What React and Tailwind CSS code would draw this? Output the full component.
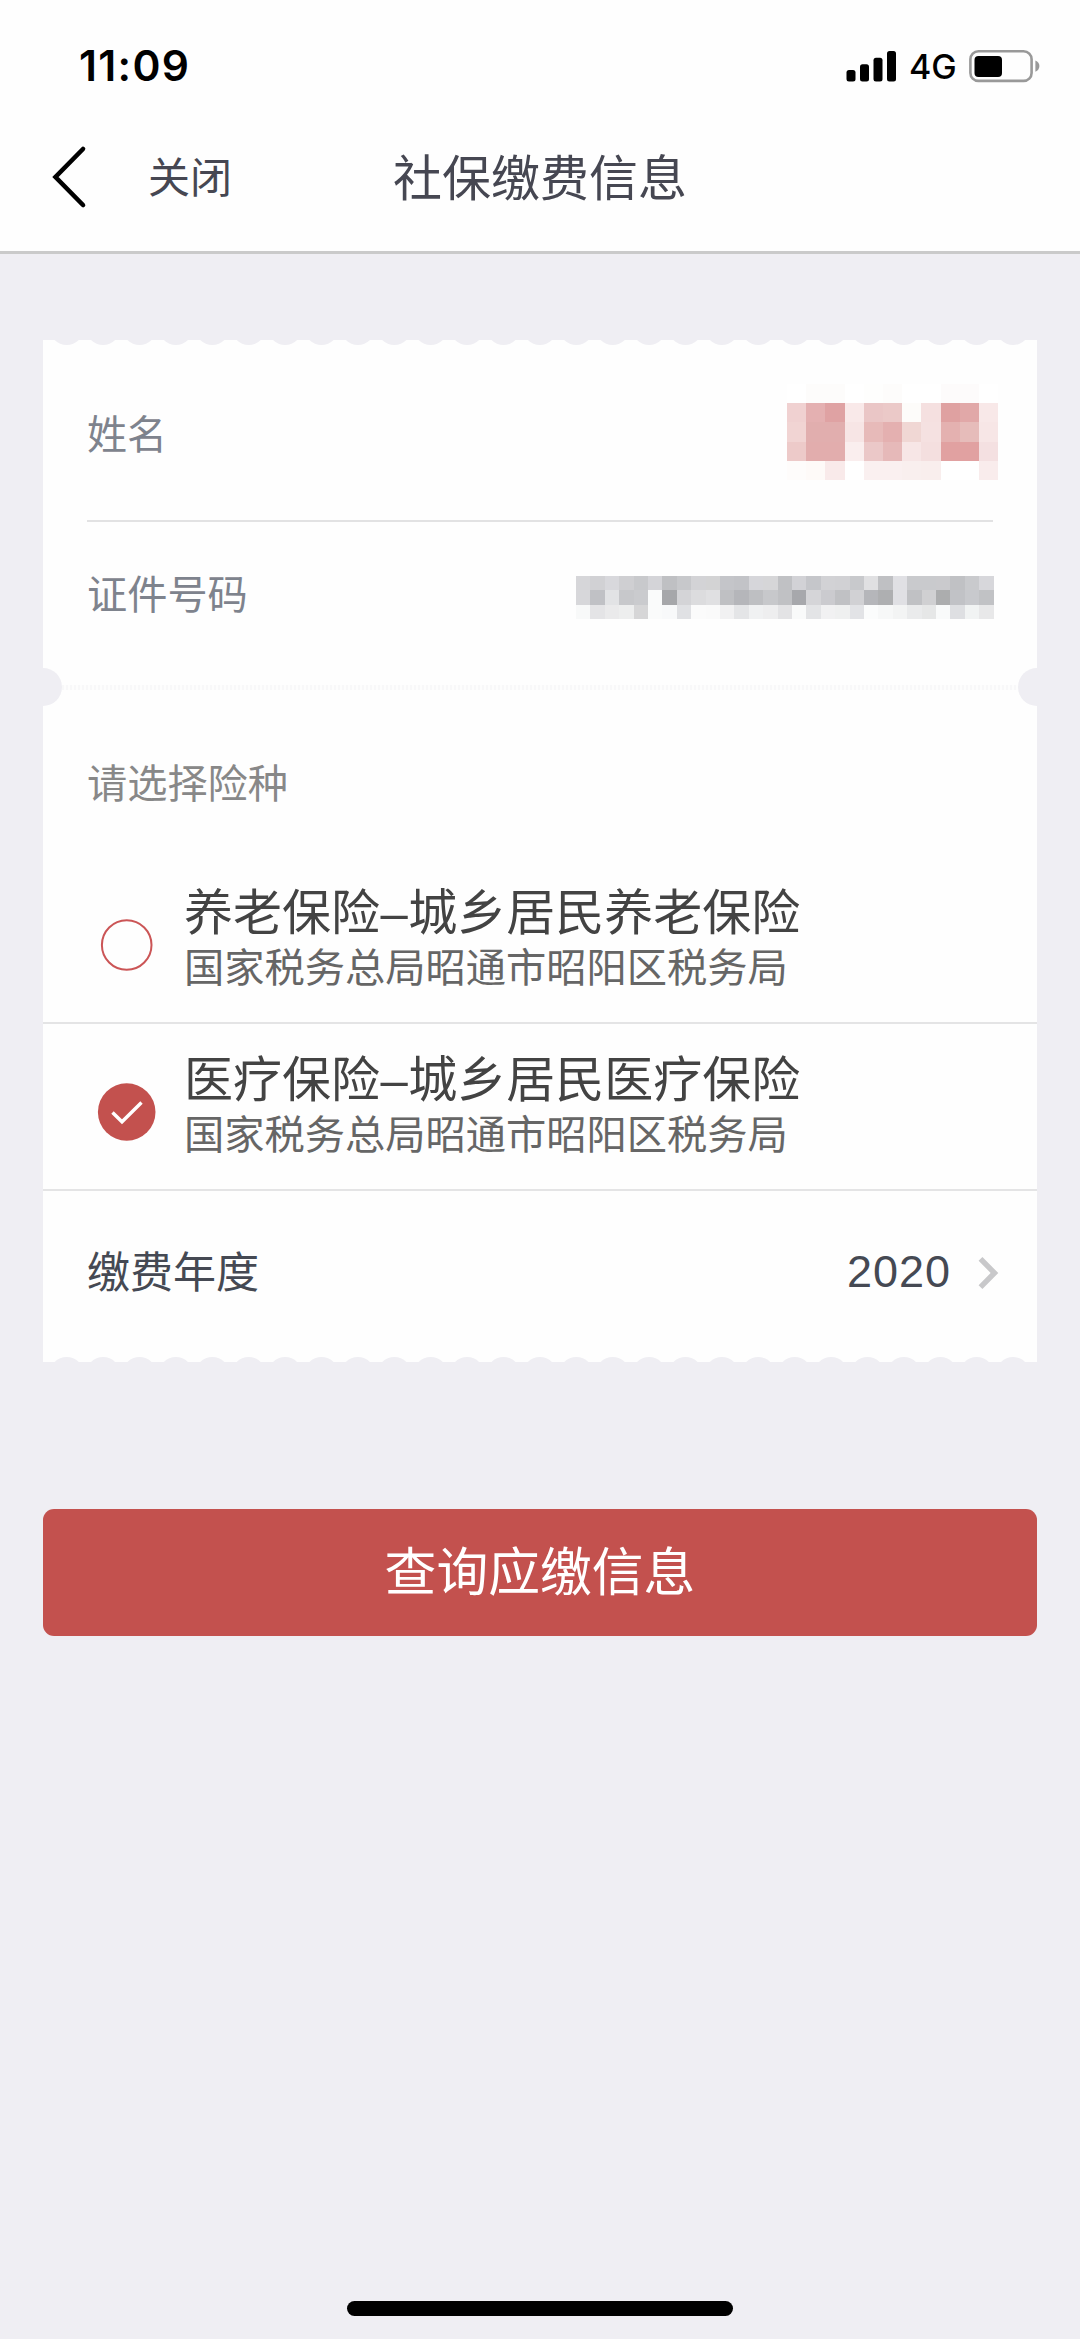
const NAME_MOSAIC = [
  ["#ffffff", "#fdfcfb", "#fdfcfb", "#ffffff", "#fefefd", "#fdfcfb", "#ffffff", "#ffffff", "#fdfbfb", "#fdfbfb", "#ffffff"],
  ["#f0d1d1", "#e4b0b1", "#dfa2a3", "#f9e9e9", "#eac6c6", "#ebc9c8", "#fdfcfa", "#f5e0e0", "#dfa1a1", "#e1a8a8", "#f8e8e8"],
  ["#f1d4d3", "#e1aeae", "#e1aeae", "#f7e5e5", "#e7bab9", "#e4b0b0", "#f0d7d4", "#f5e1e1", "#e4b1b0", "#e6bcba", "#f7e6e6"],
  ["#edcac9", "#e2adad", "#e2adad", "#faeeee", "#ebc8c8", "#e6b9b9", "#f7e6e6", "#f4dfdf", "#e1a1a1", "#e1a1a1", "#f4e0e1"],
  ["#fefcfb", "#fefaf8", "#f9eaea", "#ffffff", "#faf0f0", "#faf0f0", "#f9efee", "#f9eeed", "#ffffff", "#ffffff", "#f9ecec"],
];

const ID_MOSAIC = [
  "d6d6d9 d1d1d4 d8d8dc cfcfd2 c8c9cc d4d4d8 bfc0c3 c7c8cb d3d3d6 d3d3d4 c4c5c9 c2c3c7 d6d6da d6d6d8 c0c1c4 d2d2d6 c5c6ca d2d2d5 d1d1d4 c8c9cc e0e0e2 bfc0c3 e0e0e4 c9cacd c9cacd cacacd c0c1c4 c9cacd d7d7db",
  "d7d7da c0c1c5 e2e3e5 c7c8cb cacbce fafbfb a6a7aa d4d4d7 dcdcde e0e0e2 bfc0c3 b5b6ba bebfc2 c7c8cb c0c1c4 a7a8ac d5d5d8 cbcbcf c0c1c4 d1d1d4 b5b6ba aeafb1 e0e0e4 c0c1c4 d0d0d2 acadae c1c2c6 c8c9cd c1c2c5",
  "f8f9f9 e4e4e6 eaeaeb edeeee d6d6d7 fafbfb f8f9fa e0e1e4 fbfbfb fafafa f1f1f2 e4e5e7 f0f1f2 eeeeef e3e3e5 f9fafa e3e4e6 f1f1f2 eff0f0 e2e3e6 fbfcfc f7f8f8 f3f4f4 eaebec e6e7e7 f9fafa dedfe2 f1f3f3 e8e8e9",
].map((row) => row.split(" ").map((c) => "#" + c));

function Mosaic({ rows, cell, className }) {
  return (
    <svg
      className={className}
      width={rows[0].length * cell}
      height={rows.length * cell}
      shapeRendering="crispEdges"
      aria-hidden="true"
    >
      {rows.map((row, y) =>
        row.map((fill, x) => (
          <rect key={`${x}-${y}`} x={x * cell} y={y * cell} width={cell} height={cell} fill={fill} />
        ))
      )}
    </svg>
  );
}

function Scallops({ className, flip }) {
  return (
    <svg className={className} width="994" height="5" viewBox="0 0 994 5" aria-hidden="true">
      {Array.from({ length: 27 }, (_, i) => (
        <circle key={i} cx={23.7 + i * 36.4} cy={flip ? 17 : -12} r="17" fill="#efeef3" />
      ))}
    </svg>
  );
}

function StatusBar() {
  return (
    <div className="flex h-[98px] items-start justify-between pl-[79px] pr-[40px]">
      <span className="mt-[40px] font-['Inter',sans-serif] text-[42.5px] font-semibold leading-[52px] tracking-[1.3px] text-black">11:09</span>
      <div className="mt-[48px] flex h-9 items-center">
        <svg width="50" height="36" viewBox="0 0 50 36" fill="#000">
          <rect x="0.5" y="22" width="9" height="11.5" rx="2.5" />
          <rect x="14" y="16.2" width="9" height="17.3" rx="2.5" />
          <rect x="27.5" y="9.7" width="9" height="23.8" rx="2.5" />
          <rect x="41" y="3" width="9" height="30.5" rx="2.5" />
        </svg>
        <span className="ml-[13px] mt-px w-[49px] font-['Inter',sans-serif] text-[34px] font-medium leading-9 text-black">4G</span>
        <svg className="ml-[11px]" width="71" height="36" viewBox="0 0 71 36">
          <rect x="1.4" y="3.3" width="61.2" height="29.6" rx="8" fill="none" stroke="#999" strokeWidth="2.6" />
          <rect x="5.5" y="7.9" width="27.5" height="21" rx="4" fill="#000" />
          <path d="M66.4 12.5c2.6 1 4 3 4 5.6s-1.4 4.6-4 5.6z" fill="#999" />
        </svg>
      </div>
    </div>
  );
}

function Option({ title, office, checked }) {
  return (
    <div className="flex h-[167px] items-center border-b-2 border-[#e4e4e5] pl-[54px]">
      <svg className="mt-[10px] shrink-0" width="60" height="60" viewBox="0 0 60 60" fill="none">
        {checked ? (
          <>
            <circle cx="29.7" cy="30" r="28.8" fill="#c3514e" />
            <path d="M15.5 30.5 25 39.8 44.5 20.5" stroke="#fff" strokeWidth="3.4" />
          </>
        ) : (
          <circle cx="29.7" cy="30" r="24.8" stroke="#cb5556" strokeWidth="2" />
        )}
      </svg>
      <div className="-mt-[6px] ml-[27px] whitespace-nowrap">
        <div className="text-[49px] leading-[52px] text-[#434343]">
          {title[0]}
          <span className="mx-[0.5px] font-['Liberation_Sans',sans-serif]">–</span>
          {title[1]}
        </div>
        <div className="text-[40.25px] leading-[52px] text-[#666]">{office}</div>
      </div>
    </div>
  );
}

export default function App() {
  return (
    <div className="flex h-[2339px] w-[1080px] flex-col bg-[#efeef3] font-['Noto_Sans_CJK_SC',sans-serif]">
      <header className="h-[254px] shrink-0 border-b-3 border-[#cacaca] bg-[#fefefe]">
        <StatusBar />
        <nav className="grid h-[152px] grid-cols-[393px_294px_1fr] items-center">
          <div className="flex items-center pl-[50px] pt-[6px]">
            <svg width="38" height="66" viewBox="0 0 38 66" fill="none">
              <path d="M33 5 5.5 33 33 61" stroke="#000" strokeWidth="4.6" strokeLinecap="round" strokeLinejoin="miter" />
            </svg>
            <span className="-mt-[5px] ml-[60px] text-[42px] leading-[60px] text-[#464752]">关闭</span>
          </div>
          <h1 className="whitespace-nowrap pt-px text-[49px] leading-[70px] text-[#464752]">社保缴费信息</h1>
        </nav>
      </header>

      <main className="mx-[43px] mt-[86px] flex flex-col">
        <section className="relative h-[1022px] bg-[#fefefe]">
          <Scallops className="absolute left-0 top-0" />
          <div className="mx-[44px] flex h-[182px] items-center justify-between border-b-2 border-[#e2e2e3]">
            <span className="mt-[4px] text-[40px] leading-[56px] text-[#7e838d]">姓名</span>
            <Mosaic rows={NAME_MOSAIC} cell={19.2} className="mr-[-5px] mt-[4px]" />
          </div>
          <div className="mx-[43px] flex h-[165px] items-center justify-between pl-px">
            <span className="mt-[-26px] text-[40.2px] leading-[56px] text-[#7e838d]">证件号码</span>
            <Mosaic rows={ID_MOSAIC} cell={14.4} className="mt-[-14px]" />
          </div>
          <div className="absolute left-0 top-[328px] flex h-[38px] w-full items-center overflow-hidden">
            <span className="-ml-[19px] size-[38px] shrink-0 rounded-full bg-[#efeef3]" />
            <span className="h-[5px] flex-1 bg-[repeating-linear-gradient(90deg,#f8f8f9_0px_2px,#fdfdfd_2px_4px)]" />
            <span className="-mr-[19px] size-[38px] shrink-0 rounded-full bg-[#efeef3]" />
          </div>
          <h2 className="flex h-[170px] items-center pl-[44px] pt-[18px] text-[40.2px] leading-[56px] text-[#888]">请选择险种</h2>
          <Option title={["养老保险", "城乡居民养老保险"]} office="国家税务总局昭通市昭阳区税务局" />
          <Option title={["医疗保险", "城乡居民医疗保险"]} office="国家税务总局昭通市昭阳区税务局" checked />
          <div className="flex h-[160px] items-center justify-between pl-[44px] pr-[37px]">
            <span className="-mt-[5px] text-[43px] leading-[60px] text-[#454953]">缴费年度</span>
            <span className="flex items-center">
              <span className="mt-[2px] font-['Liberation_Sans',sans-serif] text-[45px] leading-[52px] tracking-[1px] text-[#454953]">2020</span>
              <svg className="ml-[25px] mt-[3px]" width="24" height="36" viewBox="0 0 24 36" fill="none">
                <path d="M4.5 3.9 18.5 18 4.5 32.1" stroke="#c8c8ca" strokeWidth="5.4" />
              </svg>
            </span>
          </div>
          <Scallops className="absolute bottom-0 left-0" flip />
        </section>
        <button className="mt-[147px] h-[127px] rounded-[11px] bg-[#c3514e] pb-[7px] text-[51.8px] leading-[70px] text-white">查询应缴信息</button>
      </main>

      <div className="mb-[23px] ml-[347px] mt-auto h-[15px] w-[386px] rounded-full bg-black" />
    </div>
  );
}
